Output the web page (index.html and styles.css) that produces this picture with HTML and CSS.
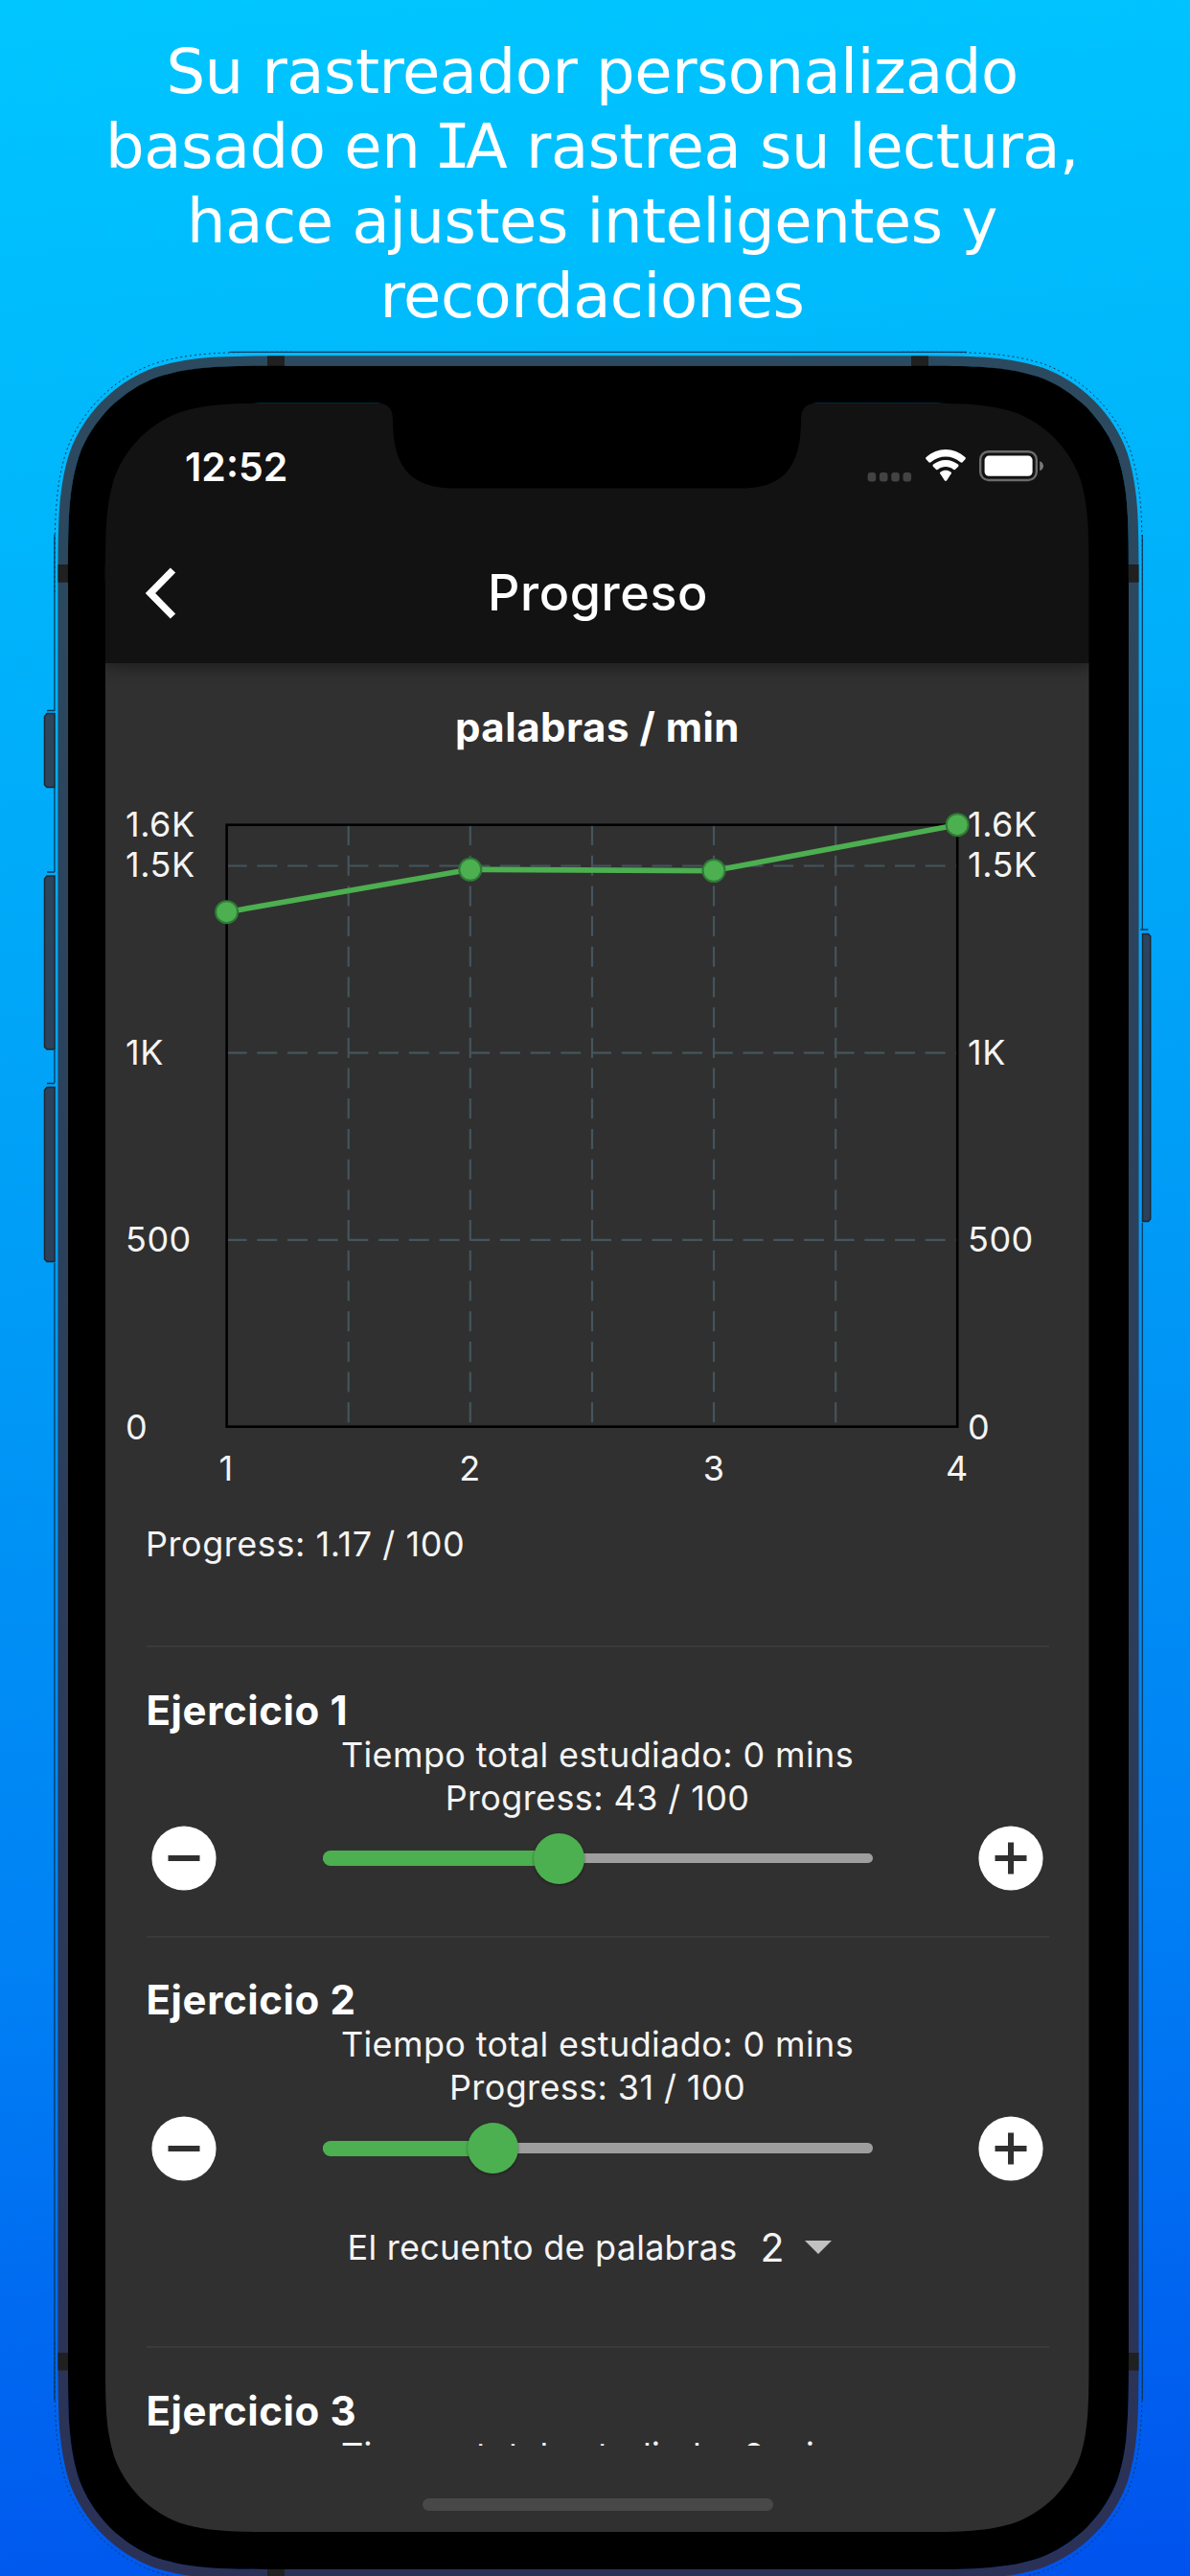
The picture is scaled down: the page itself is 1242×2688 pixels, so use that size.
FILE: index.html
```html
<!DOCTYPE html>
<html lang="es">
<head>
<meta charset="utf-8">
<title>Progreso</title>
<link rel="stylesheet" href="styles.css">
</head>
<body>
<main class="promo">
  <h1 class="headline">Su rastreador personalizado<br>basado en <span class="slab-i">I</span>A rastrea su lectura,<br>hace ajustes inteligentes y<br>recordaciones</h1>

  <div class="screen">
    <header class="topbar">
      <div class="status">
        <span class="clock">12:52</span>
        <svg class="status-icons" width="186" height="36" viewBox="0 0 186 36">
          <g fill="#434343"><rect x="1.6" y="25" width="8.6" height="9.4" rx="3"/><rect x="13.9" y="25" width="8.6" height="9.4" rx="3"/><rect x="26.2" y="25" width="8.6" height="9.4" rx="3"/><rect x="38.5" y="25" width="8.6" height="9.4" rx="3"/></g>
          <path fill="#fff" d="M62.6 11.3a1.6 1.6 0 0 1 .1-2.2C74.5 -1.7 91.5 -1.7 103.3 9.100a1.6 1.6 0 0 1 .1 2.200L100.6 14.200a1.6 1.6 0 0 1-2.200.1C89.500 6.600 76.500 6.600 67.600 14.300a1.600 1.600 0 0 1-2.200-.1zM70 18.900a1.600 1.600 0 0 1 .1-2.300C77.500 10.300 88.500 10.300 95.900 16.600a1.600 1.600 0 0 1 .1 2.300L93.100 21.700a1.600 1.600 0 0 1-2.200.1C86.500 18 79.500 18 75.100 21.800a1.600 1.600 0 0 1-2.200-.1zM77.600 26.800a1.400 1.400 0 0 1 .1-2.200C80.600 22.200 85.400 22.200 88.300 24.600a1.400 1.400 0 0 1 .1 2.200L84.200 33.300a1.600 1.600 0 0 1-2.400 0z"/>
          <rect x="119.2" y="3.2" width="58.6" height="29.8" rx="8.5" fill="none" stroke="#6b6b6b" stroke-width="2.4"/>
          <rect x="123.6" y="7.6" width="50" height="21.2" rx="4.5" fill="#fff"/>
          <path fill="#7a7a7a" d="M181.2 13.2c5 1.8 5 8.2 0 10z"/>
        </svg>
      </div>
      <div class="toolbar">
        <svg class="back" width="34" height="56" viewBox="0 0 34 56"><path d="M30.5 4 7 28 30.5 52" fill="none" stroke="#fff" stroke-width="7.5"/></svg>
        <h2 class="title">Progreso</h2>
      </div>
    </header>

    <section class="stats">
      <h3 class="chart-title">palabras / min</h3>
      <svg class="chart" width="1027" height="750" viewBox="110 820 1027 750">
        <g class="grid" stroke-dasharray="21 10.7">
          <path d="M236.6 903.5H999M236.6 1098.7H999M236.6 1293.9H999"/>
          <path d="M363.7 861V1489M490.8 861V1489M618 861V1489M745 861V1489M872.2 861V1489"/>
        </g>
        <rect class="frame" x="236.6" y="860.7" width="762.6" height="628"/>
        <path class="series" d="M236.6 951.7 490.8 907.3 745 908.6 999.2 860.7"/>
        <g class="points"><circle cx="236.6" cy="951.7" r="11.5"/><circle cx="490.8" cy="907.3" r="11.5"/><circle cx="745" cy="908.6" r="11.5"/><circle cx="999.2" cy="860.7" r="11.5"/></g>
        <g class="axis">
          <text x="131" y="873">1.6K</text><text x="131" y="915">1.5K</text><text x="131" y="1110.5">1K</text><text x="131" y="1306">500</text><text x="131" y="1501.5">0</text>
          <text x="1010" y="873">1.6K</text><text x="1010" y="915">1.5K</text><text x="1010" y="1110.5">1K</text><text x="1010" y="1306">500</text><text x="1010" y="1501.5">0</text>
        </g>
        <g class="axis ticks">
          <text x="236" y="1544.5">1</text><text x="490.5" y="1544.5">2</text><text x="745" y="1544.5">3</text><text x="999" y="1544.5">4</text>
        </g>
      </svg>
      <p class="overall">Progress: 1.17 / 100</p>
    </section>

    <section class="exercise">
      <h3>Ejercicio 1</h3>
      <p>Tiempo total estudiado: 0 mins</p>
      <p>Progress: 43 / 100</p>
      <div class="control">
        <svg class="btn" viewBox="0 0 68 68"><circle cx="34" cy="34" r="33.6" fill="#fff"/><path d="M17.5 34h33" stroke="#303030" stroke-width="6"/></svg>
        <div class="slider"><div class="fill" style="width:43%"></div><div class="thumb" style="left:43%"></div></div>
        <svg class="btn" viewBox="0 0 68 68"><circle cx="34" cy="34" r="33.6" fill="#fff"/><path d="M17.5 34h33M34 17.5v33" stroke="#303030" stroke-width="6"/></svg>
      </div>
    </section>

    <section class="exercise tall">
      <h3>Ejercicio 2</h3>
      <p>Tiempo total estudiado: 0 mins</p>
      <p>Progress: 31 / 100</p>
      <div class="control">
        <svg class="btn" viewBox="0 0 68 68"><circle cx="34" cy="34" r="33.6" fill="#fff"/><path d="M17.5 34h33" stroke="#303030" stroke-width="6"/></svg>
        <div class="slider"><div class="fill" style="width:31%"></div><div class="thumb" style="left:31%"></div></div>
        <svg class="btn" viewBox="0 0 68 68"><circle cx="34" cy="34" r="33.6" fill="#fff"/><path d="M17.5 34h33M34 17.5v33" stroke="#303030" stroke-width="6"/></svg>
      </div>
      <div class="picker">
        <span class="label">El recuento de palabras</span>
        <span class="value">2</span>
        <svg width="28" height="14" viewBox="0 0 28 14"><path d="M0 0h28L14 14z" fill="#c1c1c1"/></svg>
      </div>
    </section>

    <section class="exercise cut">
      <h3>Ejercicio 3</h3>
      <p>Tiempo total estudiado: 0 mins</p>
    </section>
    <div class="home"></div>
  </div>

  <svg class="device" width="1242" height="2688" viewBox="0 0 1242 2688">
    <defs>
      <linearGradient id="metal" x1="0" y1="371" x2="0" y2="2691" gradientUnits="userSpaceOnUse"><stop offset="0" stop-color="#2c4a5f"/><stop offset="1" stop-color="#2b3156"/></linearGradient>
    </defs>
    <!-- side buttons -->
    <g fill="url(#metal)" stroke="#20272e" stroke-width="1.5">
      <path d="M57 744.5H49l-2.5 3V819l2.5 2.5h8zM57 914H49l-2.5 3v175.5l2.5 2.5h8zM57 1134.5H49l-2.5 3V1314l2.5 2.5h8zM1192.5 974.5h6l2.2 2.5v295l-2.2 2.5h-6z"/>
    </g>
    <!-- hairline around the metal band -->
    <g fill="none" stroke="#063a5e" stroke-width="1.3">
      <path d="M240 367.3H1009M56.9 558V742M49 741.5h8M56.9 822v88M49 910h8M56.9 1096v34M49 1130.5h8M56.9 1318V2505M1192.3 558V970h-2m0 0h8M1192.3 1276V2505"/>
      <path stroke-dasharray="2 3" stroke-width="1" d="M56.9 618c0-72.2 0-108.3 12.3-147.1c15.4-42.4 48.9-75.8 91.3-91.3c38.9-12.3 74.9-12.3 147.1-12.3M941.6 367.3c72.2 0 108.3 0 147.1 12.3c42.4 15.4 75.8 48.9 91.3 91.3c12.3 38.9 12.3 74.9 12.3 147.1M56.9 2444.8c0 72.2 0 108.3 12.3 147.1c15.4 42.4 48.9 75.8 91.3 91.3c38.9 12.3 74.9 12.3 147.1 12.3M1192.3 2444.8c0 72.2 0 108.3-12.3 147.1c-15.4 42.4-48.9 75.8-91.3 91.3c-38.9 12.3-74.9 12.3-147.1 12.3"/>
    </g>
    <!-- metal band and black bezel with the display cut out -->
    <path fill="none" stroke="url(#metal)" stroke-width="10.5" d="M302.7 376.6H946.3c68.2 0 102.3 0 139.1 11.6c40.1 14.6 71.7 46.2 86.3 86.3c11.6 36.700 11.600 70.800 11.600 139.100V2449.300c0 68.200 0 102.300-11.600 139.100c-14.600 40.100-46.200 71.700-86.300 86.300c-36.700 11.600-70.800 11.600-139.100 11.600H302.700c-68.200 0-102.300 0-139.100-11.600c-40.100-14.600-71.700-46.200-86.300-86.300c-11.600-36.700-11.600-70.800-11.600-139.100V613.600c0-68.200 0-102.300 11.600-139.100c14.600-40.100 46.200-71.700 86.300-86.300c36.700-11.600 70.800-11.600 139.100-11.600z"/>
    <g fill="#202020"><path d="M279 371.5h18v11h-18zM951 371.5h18v11h-18zM60.5 589H72v18.700H60.500zM1177.500 589h11v18.700h-11zM60.500 2455H72v18.500H60.500zM1177.500 2455h11v18.500h-11zM279 2680h18v8h-18z"/></g>
    <path fill="#000" fill-rule="evenodd" d="M300.3 381.8H948.7c66 0 99 0 134.6 11.2c38.8 14.1 69.4 44.7 83.5 83.5c11.2 35.5 11.2 68.6 11.2 134.6V2451.7c0 66 0 99-11.2 134.6c-14.1 38.8-44.7 69.4-83.5 83.5c-35.5 11.2-68.6 11.2-134.6 11.2H300.3c-66 0-99 0-134.6-11.2c-38.8-14.1-69.4-44.7-83.5-83.5c-11.2-35.5-11.2-68.6-11.2-134.6V611.1c0-66 0-99 11.2-134.6c14.1-38.8 44.7-69.4 83.5-83.5c35.5-11.2 68.6-11.2 134.6-11.2z
      M299.5 420.8H394C405 420.8 410 427 410 438C410 482 424 509.5 474 509.5H774C822 509.5 836 482 836 438C836 427 841 420.8 852 420.8H947c54.6 0 81.9 0 111.2 9.3c32.1 11.7 57.3 36.9 69 69c9.3 29.4 9.3 56.7 9.3 111.2V2452.5c0 54.6 0 81.9-9.3 111.2c-11.700 32.100-36.900 57.300-69 69c-29.400 9.300-56.700 9.300-111.200 9.300H299.500c-54.600 0-81.900 0-111.200-9.300c-32.100-11.700-57.300-36.900-69-69c-9.300-29.400-9.300-56.700-9.300-111.200V610.300c0-54.600 0-81.900 9.300-111.200c11.700-32.100 36.900-57.300 69-69c29.400-9.300 56.700-9.300 111.200-9.300z"/>
  </svg>
</main>
</body>
</html>
```
FILE: styles.css
```css
* { box-sizing: border-box; margin: 0; padding: 0; }
body { width: 1242px; height: 2688px; overflow: hidden; }
svg { display: block; flex: none; }

.promo {
  position: relative;
  height: 2688px;
  overflow: hidden;
  background: linear-gradient(175deg, #00c6ff 0%, #00b4fb 22%, #009af6 50%, #0080f4 74%, #0052ed 100%);
  font-family: Inter, "Liberation Sans", sans-serif;
  color: #fff;
}
.headline {
  width: 1236px;
  height: 421px;
  padding-top: 36px;
  font: 400 64px/78px Verdana, "DejaVu Sans", sans-serif;
  letter-spacing: -0.48px;
  text-align: center;
}
.slab-i { font-family: "DejaVu Sans Mono", monospace; margin: 0 -0.08em; }

.screen {
  display: flex;
  flex-direction: column;
  width: 1027px;
  height: 2221px;
  margin-left: 110px;
  background: #303030;
}
.topbar { flex: none; height: 271px; background: #121212; box-shadow: 0 4px 14px rgba(0, 0, 0, .4); }
.status {
  display: flex;
  justify-content: space-between;
  height: 124px;
  padding: 47px 47px 0 83px;
}
.clock { font-size: 41px; font-weight: 600; line-height: 38px; }
.toolbar { display: flex; align-items: center; height: 147px; padding-left: 40px; }
.title {
  flex: 1;
  padding-right: 73px;
  text-align: center;
  font-size: 52px;
  font-weight: 500;
  letter-spacing: .6px;
}

.stats { flex: none; height: 1025px; }
.chart-title { padding-top: 42px; height: 128px; font-size: 42px; line-height: 50px; letter-spacing: .5px; text-align: center; }
.chart { font-size: 36px; letter-spacing: .5px; }
.grid { fill: none; stroke: #45545c; stroke-width: 2.2; }
.frame { fill: none; stroke: #000; stroke-width: 2.6; }
.series { fill: none; stroke: #4caf50; stroke-width: 5.6; }
.points { fill: #4caf50; stroke: #2f7a35; stroke-width: 2; }
.axis { fill: #f4f4f4; }
.ticks { text-anchor: middle; }
.overall { padding-left: 42px; margin-top: 19px; font-size: 36px; line-height: 45px; letter-spacing: .55px; color: #f4f4f4; }

.exercise {
  flex: none;
  height: 302.7px;
  margin: 0 42.5px;
  padding-top: 40.5px;
  border-top: 2.6px solid #3a3a3a;
}
.exercise h3 { font-size: 42px; font-weight: 700; line-height: 49px; letter-spacing: .6px; }
.exercise p { font-size: 36px; line-height: 45px; letter-spacing: .38px; text-align: center; color: #f4f4f4; }
.tall { height: 428.8px; }
.cut { height: 104px; overflow: hidden; }
.control {
  display: flex;
  align-items: center;
  justify-content: space-between;
  height: 81px;
  padding: 0 5.5px;
}
.btn { width: 68px; height: 68px; }
.slider {
  position: relative;
  display: flex;
  align-items: center;
  width: 574px;
  height: 10.5px;
  border-radius: 6px;
  background: #9e9e9e;
}
.fill { height: 16px; border-radius: 8px; background: #4caf50; }
.thumb {
  position: absolute;
  top: 50%;
  width: 53px;
  height: 53px;
  margin: -26.5px 0 0 -26.5px;
  border-radius: 50%;
  background: #4caf50;
  box-shadow: 0 1px 3px rgba(0, 0, 0, .4);
}
.picker {
  display: flex;
  align-items: center;
  height: 76px;
  margin-top: 24.5px;
  padding-left: 210px;
  font-size: 36px;
  color: #f4f4f4;
}
.label { letter-spacing: .25px; }
.value { margin: 0 22px 0 24px; font-size: 41px; }
.home { flex: none; width: 366px; height: 13px; margin: 55px auto 0; border-radius: 7px; background: #484848; }

/* The handset is drawn over the page, with its display left open */
.device { position: absolute; inset: 0; }
```
